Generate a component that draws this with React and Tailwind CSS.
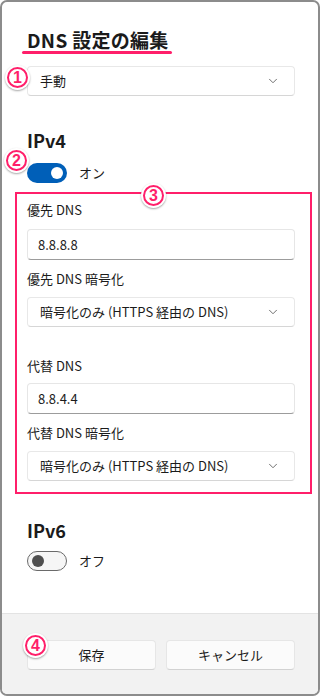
import React from 'react';
import { ChevronDown } from 'lucide-react';

const font = { fontFamily: '"Noto Sans CJK JP", "Noto Sans", sans-serif' };

// circled annotation number
const Badge = ({ n, className }) => (
  <div className={`absolute w-[25px] h-[25px] rounded-full bg-white shadow-[0_1px_2px_rgba(0,0,0,0.35)] flex items-center justify-center ${className}`}>
    <div className="w-[21px] h-[21px] rounded-full border-2 border-[#ff1f6a] text-[#ff1f6a] text-[16px] font-bold leading-none flex items-center justify-center" style={{ fontFamily: '"Liberation Sans", sans-serif' }}>
      {n}
    </div>
  </div>
);

const Select = ({ value, className = '' }) => (
  <div className={`h-[30px] rounded-[4px] bg-white border border-[#e8e8e8] border-b-[#d6d6d6] flex items-center justify-between pl-[12px] pr-[14px] text-[13px] text-[#1b1b1b] ${className}`}>
    <span>{value}</span>
    <ChevronDown size={14} strokeWidth={1.5} className="text-[#5c5c5c]" />
  </div>
);

const Input = ({ value, className = '' }) => (
  <div className={`h-[31px] rounded-[4px] bg-white border border-[#e6e6e6] border-b-[#9c9c9c] flex items-center pl-[10px] text-[13px] text-[#1b1b1b] ${className}`}>
    {value}
  </div>
);

const Toggle = ({ on, label, className = '' }) => (
  <div className={`flex items-center gap-[12px] h-[20px] ${className}`}>
    {on ? (
      <div className="w-[40px] h-[20px] rounded-full bg-[#005fb8] flex items-center justify-end pr-[4px]">
        <div className="w-[12px] h-[12px] rounded-full bg-white" />
      </div>
    ) : (
      <div className="w-[40px] h-[20px] rounded-full border border-[#6a6a6a] bg-[#f6f6f6] flex items-center pl-[4px]">
        <div className="w-[12px] h-[12px] rounded-full bg-[#4f4f4f]" />
      </div>
    )}
    <span className="text-[13px] text-[#1b1b1b]">{label}</span>
  </div>
);

export default function App() {
  return (
    <div className="w-[320px] h-[696px] bg-white" style={font}>
      <div className="relative w-full h-full border-2 border-[#8c8c8c] rounded-[7px] overflow-hidden flex flex-col bg-white">
        <div className="pl-[25px] pr-[23px] pt-[27px]">
          <div className="text-[19px] leading-[22px] font-semibold tracking-[0.3px] text-[#1b1b1b]">DNS 設定の編集</div>
          <div className="h-[3px] w-[150px] -ml-[5px] bg-[#ff1f6a] rounded-full" />

          <Select value="手動" className="mt-[12px]" />

          <div className="mt-[32px] text-[18px] leading-[24px] font-semibold text-[#1b1b1b]">IPv4</div>
          <Toggle on label="オン" className="mt-[11px]" />

          <div className="mt-[9px] -ml-[12px] -mr-[17px] border-2 border-[#ff1f6a] pl-[10px] pr-[15px] pt-[6px] pb-[11px]">
            <div className="text-[13px] leading-[20px] text-[#1b1b1b]">優先 DNS</div>
            <Input value="8.8.8.8" className="mt-[9px]" />
            <div className="mt-[9px] text-[13px] leading-[20px] text-[#1b1b1b]">優先 DNS 暗号化</div>
            <Select value="暗号化のみ (HTTPS 経由の DNS)" className="mt-[8px]" />

            <div className="mt-[29px] text-[13px] leading-[20px] text-[#1b1b1b]">代替 DNS</div>
            <Input value="8.8.4.4" className="mt-[7px]" />
            <div className="mt-[9px] text-[13px] leading-[20px] text-[#1b1b1b]">代替 DNS 暗号化</div>
            <Select value="暗号化のみ (HTTPS 経由の DNS)" className="mt-[8px]" />
          </div>

          <div className="mt-[24px] text-[18px] leading-[24px] font-semibold text-[#1b1b1b]">IPv6</div>
          <Toggle on={false} label="オフ" className="mt-[9px]" />
        </div>

        <div className="mt-auto h-[81px] border-t border-[#e3e3e3] bg-[#f2f2f2] pl-[25px] pr-[23px] pt-[26px] flex gap-[10px]">
          <div className="flex-1 h-[30px] rounded-[4px] bg-[#fbfbfb] border border-[#e6e6e6] border-b-[#d2d2d2] flex items-center justify-center text-[13px] text-[#1b1b1b]">保存</div>
          <div className="flex-1 h-[30px] rounded-[4px] bg-[#fbfbfb] border border-[#e6e6e6] border-b-[#d2d2d2] flex items-center justify-center text-[13px] text-[#1b1b1b]">キャンセル</div>
        </div>

        <Badge n="1" className="left-[3px] top-[63px]" />
        <Badge n="2" className="left-[2px] top-[146px]" />
        <Badge n="3" className="left-[139px] top-[181px]" />
        <Badge n="4" className="left-[21px] top-[631px]" />
      </div>
    </div>
  );
}
